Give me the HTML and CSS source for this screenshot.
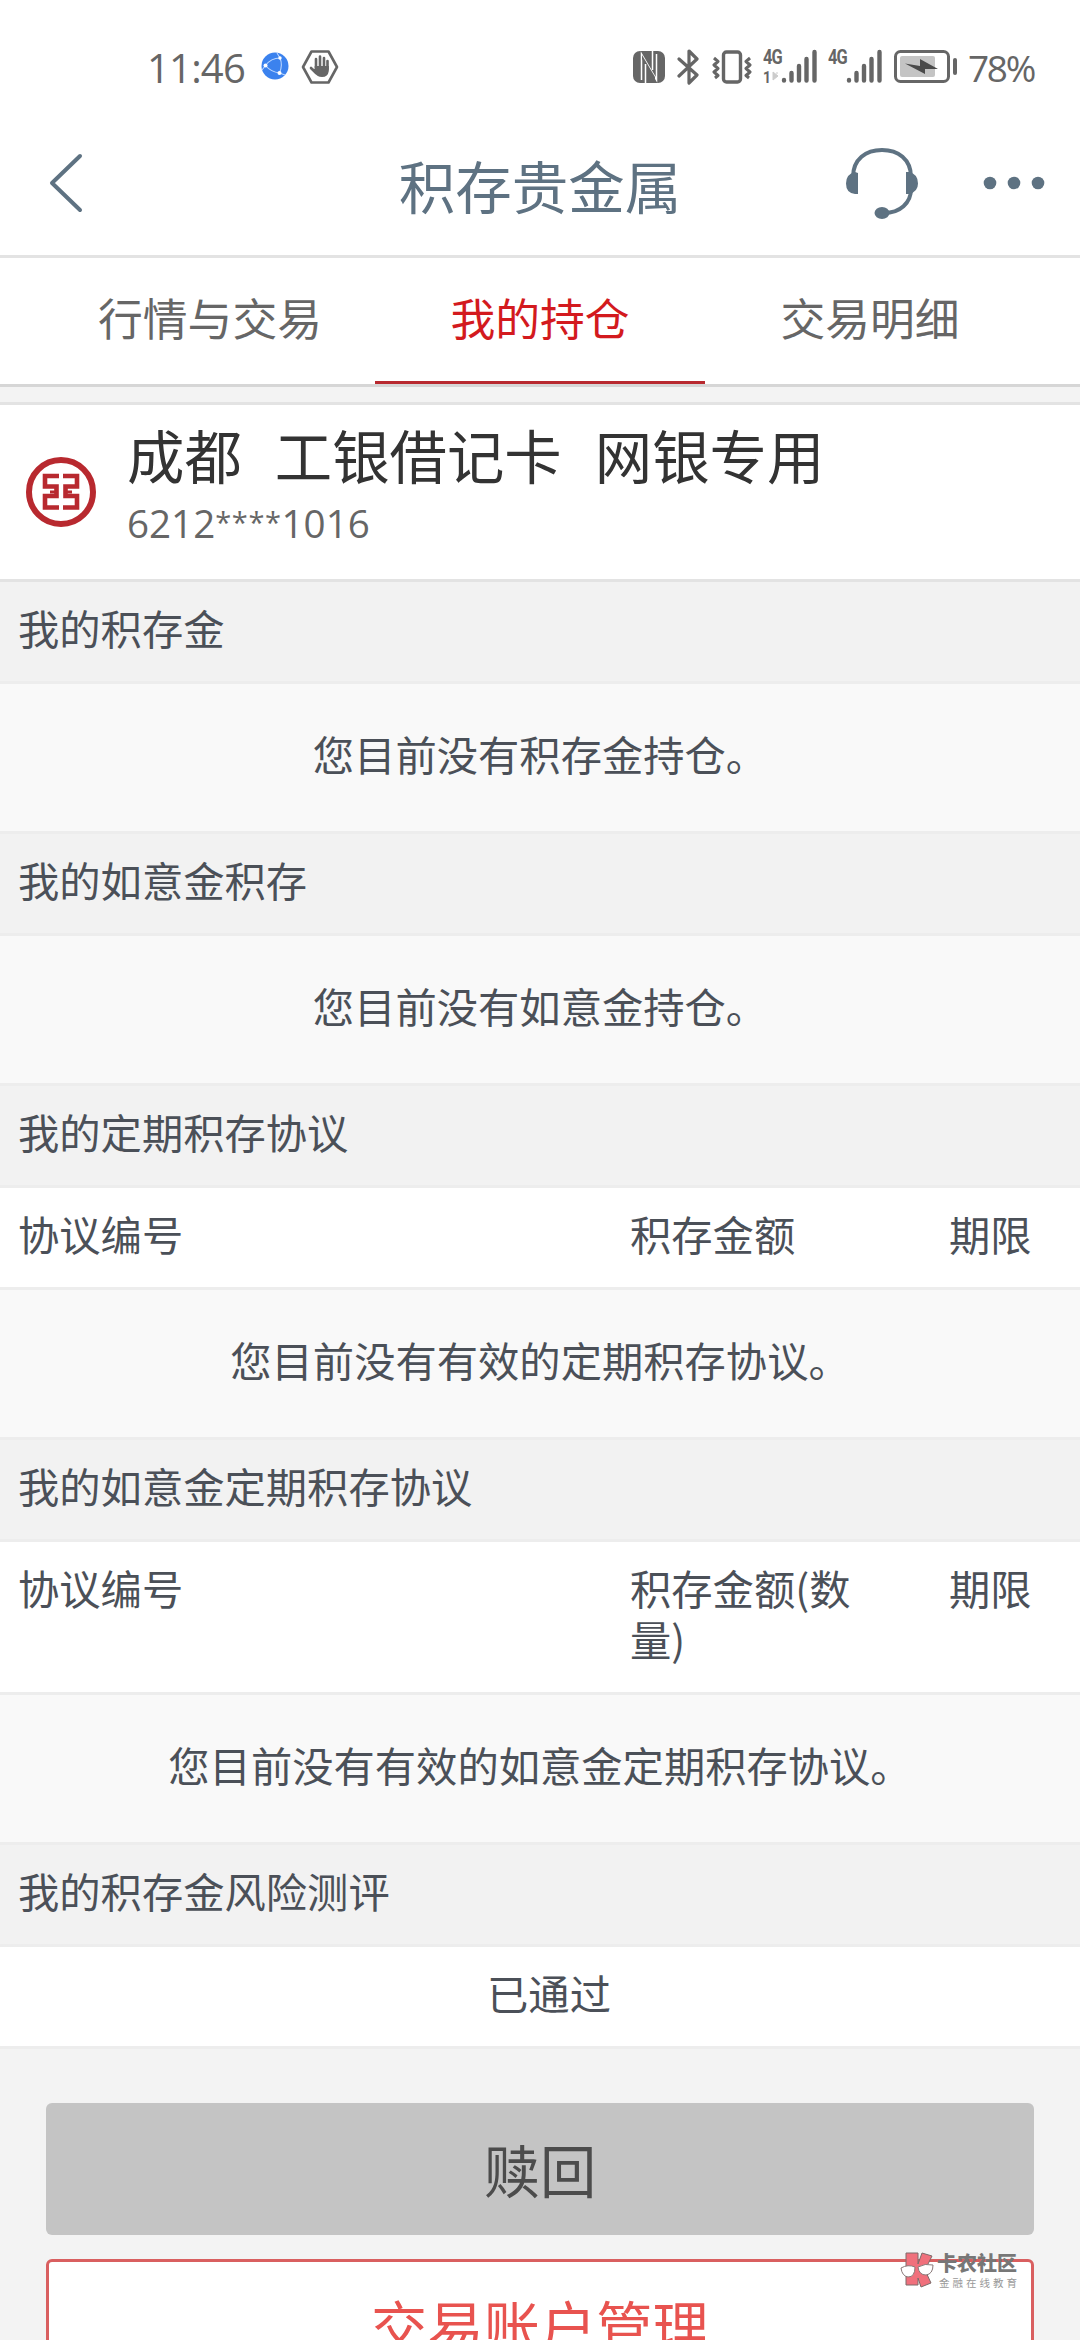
FILE: index.html
```
<!DOCTYPE html>
<html lang="zh-CN">

<head>
      <meta charset="UTF-8">
      <meta name="viewport" content="width=device-width, initial-scale=1.0">
      <title>积存贵金属</title>
      <link rel="stylesheet" href="styles.css">
</head>

<body>
      <div class="status-bar">
            <div class="status-left">
                  <span class="clock">11:46</span>
                  <svg class="globe" width="28" height="28" viewBox="0 0 28 28">
                        <circle cx="14" cy="14" r="13.5" fill="#3b82ee" />
                        <path d="M4.500 13.500Q10 6 19 6M4.500 13.500Q10 20 18.500 21M19 6Q22 13 18.500 21M19 6L16 1M18.500 21L24 23M4.500 13.500L1 18" fill="none" stroke="#bcd7ff" stroke-width="1.100" />
                        <circle cx="4.500" cy="13.500" r="2" fill="#fff" />
                        <circle cx="19" cy="6" r="1.700" fill="#fff" />
                        <circle cx="18.500" cy="21" r="2" fill="#fff" />
                  </svg>
                  <svg class="hand" width="38" height="36" viewBox="0 0 38 36">
                        <path d="M10.500 2.500H27.500L36 18L27.500 33.500H10.500L2 18Z" fill="none" stroke="#666" stroke-width="2.600" stroke-linejoin="round" />
                        <path d="M15 19V10M19 18V7.500M23 18V9M26.500 20V12M10 19L15 24" stroke="#666" stroke-width="2.600" stroke-linecap="round" />
                        <path d="M13.700 17H27.800V22Q27 28 21 28Q16 28 14 24L10 19.500L13.700 20Z" fill="#666" />
                  </svg>
            </div>
            <div class="status-right">
                  <svg class="nfc" width="32" height="32" viewBox="0 0 32 32">
                        <rect width="32" height="32" rx="7" fill="#666" />
                        <path d="M8.500 29V3L22.500 27M23.500 3V29L9.500 5" fill="none" stroke="#fff" stroke-width="1.500" />
                        <path d="M9 4L22 26V29L9 8Z" fill="#666" />
                        <path d="M12.500 32V13M19.500 0V19" fill="none" stroke="#fff" stroke-width="1.500" />
                  </svg>
                  <svg class="bluetooth" width="24" height="36" viewBox="0 0 24 36">
                        <path d="M2 10L20 26L12 34V2L20 10L2 27" fill="none" stroke="#666" stroke-width="3.200" stroke-linejoin="round" stroke-linecap="round" />
                  </svg>
                  <svg class="vibrate" width="40" height="34" viewBox="0 0 40 34">
                        <rect x="11.500" y="2" width="17" height="30" rx="3" fill="none" stroke="#666" stroke-width="3.400" />
                        <path d="M2 8L6 11.500L2 15L6 18.500L2 22L6 25.500L3 28M38 8L34 11.500L38 15L34 18.500L38 22L34 25.500L37 28" fill="none" stroke="#666" stroke-width="3" stroke-linejoin="round" />
                  </svg>
                  <div class="signal first">
                        <span class="net">4G</span>
                        <span class="sim">1</span>
                        <svg class="bars" width="46" height="34" viewBox="0 0 46 34">
                              <path d="M2 23V31L7 27ZM5 24H7" fill="#ccc" stroke="#ccc" />
                              <path d="M13 31V31.500M20.500 24V31.500M28 17V31.500M35.500 10V31.500M43.500 3V31.500" stroke="#666" stroke-width="4.400" stroke-linecap="round" />
                        </svg>
                  </div>
                  <div class="signal">
                        <span class="net">4G</span>
                        <svg class="bars" width="46" height="34" viewBox="0 0 46 34">
                              <path d="M13 31V31.500M20.500 24V31.500M28 17V31.500M35.500 10V31.500M43.500 3V31.500" stroke="#666" stroke-width="4.400" stroke-linecap="round" />
                        </svg>
                  </div>
                  <svg class="battery" width="64" height="34" viewBox="0 0 64 34">
                        <rect x="1.500" y="1.500" width="53" height="30" rx="5" fill="none" stroke="#666" stroke-width="3" />
                        <rect x="6" y="6" width="35" height="21" rx="2" fill="#c4c4c4" />
                        <path d="M11 13.500L26 16V9L44 19L31 19V24Z" fill="#4a4a4a" />
                        <path d="M61 10V23" stroke="#666" stroke-width="4" stroke-linecap="round" />
                  </svg>
                  <span class="percent">78%</span>
            </div>
      </div>

      <div class="header">
            <svg class="back" width="34" height="60" viewBox="0 0 34 60">
                  <path d="M31 3L3 30L31 57" fill="none" stroke="#5e7282" stroke-width="4" stroke-linecap="round" stroke-linejoin="round" />
            </svg>
            <h1>积存贵金属</h1>
            <div class="header-icons">
                  <svg width="72" height="72" viewBox="0 0 72 72">
                        <path d="M7 30C7 12 20 3 36 3S65 12 65 30V42C65 56 54 66 38 66" fill="none" stroke="#5e7282" stroke-width="4" />
                        <path d="M12 26V47H9Q0 46 0 36.500Q0 27 9 25ZM60 25H63Q72 27 72 36.500Q72 45 63 47H60Z" fill="#5e7282" />
                        <ellipse cx="36" cy="66" rx="7.500" ry="6" fill="#5e7282" />
                  </svg>
                  <svg class="more" width="62" height="14" viewBox="0 0 62 14">
                        <circle cx="7" cy="7" r="6.300" fill="#5e7282" />
                        <circle cx="31" cy="7" r="6.300" fill="#5e7282" />
                        <circle cx="55" cy="7" r="6.300" fill="#5e7282" />
                  </svg>
            </div>
      </div>

      <div class="tabs">
            <div class="tab">行情与交易</div>
            <div class="tab active">我的持仓</div>
            <div class="tab">交易明细</div>
      </div>

      <div class="card">
            <svg class="logo" width="70" height="70" viewBox="0 0 70 70">
                  <circle cx="35" cy="35" r="32" fill="none" stroke="#b8292f" stroke-width="6" />
                  <path d="M33 19H19V29.500H30.500V39H19V50.500H33M37 19H51V29.500H39.500V39H51V50.500H37" fill="none" stroke="#b8292f" stroke-width="4.600" />
                  <path d="M24 35H30M40 35H46" stroke="#b8292f" stroke-width="3" />
            </svg>
            <div class="card-info">
                  <div class="card-name"><span>成都</span><span>工银借记卡</span><span>网银专用</span></div>
                  <div class="card-number">6212<span>****</span>1016</div>
            </div>
      </div>

      <div class="list">
            <h2>我的积存金</h2>
            <p class="empty">您目前没有积存金持仓。</p>

            <h2>我的如意金积存</h2>
            <p class="empty">您目前没有如意金持仓。</p>

            <h2>我的定期积存协议</h2>
            <div class="row">
                  <span>协议编号</span>
                  <span>积存金额</span>
                  <span>期限</span>
            </div>
            <p class="empty">您目前没有有效的定期积存协议。</p>

            <h2>我的如意金定期积存协议</h2>
            <div class="row">
                  <span>协议编号</span>
                  <span>积存金额(数量)</span>
                  <span>期限</span>
            </div>
            <p class="empty">您目前没有有效的如意金定期积存协议。</p>

            <h2>我的积存金风险测评</h2>
            <div class="result">已通过</div>
      </div>

      <div class="buttons">
            <button class="redeem">赎回</button>
            <button class="manage">交易账户管理</button>
      </div>

      <div class="watermark">
            <svg width="34" height="36" viewBox="0 0 34 36">
                  <path d="M6 1H18V12L22 1L32 4L25 18L31 31L21 35L18 26V33H6Z" fill="#f0707c" stroke="#7d6a6a" stroke-width="1" />
                  <path d="M1 16Q8 12 15 15Q15 25 8 25Q2 24 1 16ZM18 15Q25 11 33 13Q33 22 26 23Q19 23 18 15Z" fill="#fff" stroke="#8a7a7a" stroke-width="1" />
            </svg>
            <div class="watermark-text">
                  <div class="brand">卡农社区</div>
                  <div class="slogan">金融在线教育</div>
            </div>
      </div>
</body>

</html>
```
FILE: styles.css
```
* {
      box-sizing: border-box;
      font-family: "Noto Sans CJK SC", sans-serif;
}

body {
      position: relative;
      margin: 0;
      width: 1080px;
      height: 2340px;
      overflow: hidden;
      background-color: #f3f3f3;
}

h1,
h2,
p {
      margin: 0;
      font-weight: normal;
}

svg {
      display: block;
      flex-shrink: 0;
}

/* status bar */
.status-bar {
      display: flex;
      justify-content: space-between;
      height: 111px;
      padding: 49px 44px 0 147px;
      background-color: #fff;
      color: #666;
}

.status-left,
.status-right {
      display: flex;
      align-items: flex-start;
}

.clock,
.percent {
      font-family: "Open Sans", sans-serif;
      font-weight: 500;
      line-height: 38px;
}

.clock {
      width: 98px;
      font-size: 40px;
      letter-spacing: -0.8px;
}

.globe {
      margin: 3px 0 0 16px;
}

.hand {
      margin-left: 12px;
}

.nfc {
      margin: 2px 12px 0 0;
}

.bluetooth {
      margin-right: 11px;
}

.vibrate {
      margin: 1px 11px 0 0;
}

.signal {
      position: relative;
      width: 54px;
      height: 34px;
      margin-right: 12px;
}

.signal.first {
      margin-right: 11px;
}

.bars {
      margin-left: 8px;
}

.net,
.sim {
      position: absolute;
      left: 0;
      top: -2px;
      font-family: "Roboto", sans-serif;
      font-size: 20px;
      font-weight: bold;
      line-height: 20px;
      letter-spacing: -1px;
      transform: scaleX(0.82);
      transform-origin: left;
}

.sim {
      top: 18px;
      font-size: 17px;
}

.battery {
      margin: 1px 10px 0 0;
}

.percent {
      width: 68px;
      font-size: 37px;
      letter-spacing: -2.3px;
}

/* header */
.header {
      display: grid;
      grid-template-columns: 300px 1fr 300px;
      height: 147px;
      background-color: #fff;
      border-bottom: 3px solid #e3e3e3;
      color: #5e7282;
}

.back {
      margin: 42px 0 0 49px;
}

.header h1 {
      padding-top: 33px;
      font-size: 56.5px;
      line-height: 80px;
      text-align: center;
}

.header-icons {
      display: flex;
      padding: 36px 0 0 66px;
}

.more {
      margin: 29px 0 0 65px;
}

/* tabs */
.tabs {
      display: flex;
      height: 129px;
      padding: 0 45px;
      background-color: #fff;
      border-bottom: 3px solid #d6d6d6;
}

.tab {
      width: 330px;
      padding-top: 27px;
      font-size: 44.8px;
      line-height: 64px;
      text-align: center;
      color: #666;
}

.tab.active {
      color: #d31a1e;
      border-bottom: 3px solid #b8292f;
}

/* bank card */
.card {
      display: flex;
      height: 180px;
      margin-top: 15px;
      padding-left: 26px;
      background-color: #fff;
      border-top: 3px solid #e3e3e3;
      border-bottom: 3px solid #e3e3e3;
}

.logo {
      margin: 52px 31px 0 0;
}

.card-info {
      padding-top: 9px;
}

.card-name {
      display: flex;
      gap: 33px;
      font-size: 57.4px;
      line-height: 80px;
      color: #333;
}

.card-number {
      padding-top: 4px;
      font-family: "Open Sans", sans-serif;
      font-size: 38.6px;
      line-height: 50px;
      color: #666;
}

.card-number span {
      font-family: inherit;
      font-size: 29px;
      letter-spacing: 0.6px;
      position: relative;
      top: -5px;
}

/* positions */
.list {
      font-size: 41.3px;
      line-height: 51px;
      color: #4b5058;
}

.list h2,
.list .row,
.list .result,
.list .empty {
      border-bottom: 3px solid #ededed;
}

.list h2 {
      height: 102px;
      padding: 20px 18px 0;
      font-size: 41.3px;
      background-color: #f2f2f2;
}

.empty {
      height: 150px;
      padding-top: 44px;
      text-align: center;
      background-color: #f9f9f9;
}

.row {
      display: grid;
      grid-template-columns: 612px 245px 1fr;
      padding: 20px 0 28px 18px;
      background-color: #fff;
}

.row span:last-child {
      padding-left: 74px;
}

.result {
      height: 102px;
      padding: 20px 0 0 18px;
      text-align: center;
      background-color: #fff;
}

/* buttons */
.buttons {
      display: flex;
      flex-direction: column;
      gap: 24px;
      padding: 54px 46px 0;
}

button {
      height: 132px;
      padding: 0;
      border: none;
      border-radius: 6px;
      font-size: 56.3px;
      line-height: 80px;
}

.redeem {
      color: #4c4c4c;
      background-color: #c4c4c4;
}

.manage {
      color: #e8534f;
      background-color: #fff;
      border: 3px solid #d95f60;
}

.watermark {
      position: absolute;
      left: 900px;
      top: 2252px;
      display: flex;
      gap: 3px;
}

.brand {
      font-size: 20px;
      font-weight: 900;
      line-height: 22px;
      color: #777;
}

.slogan {
      padding: 1px 0 0 2px;
      font-size: 10.5px;
      line-height: 15px;
      letter-spacing: 3px;
      color: #999;
}
```
